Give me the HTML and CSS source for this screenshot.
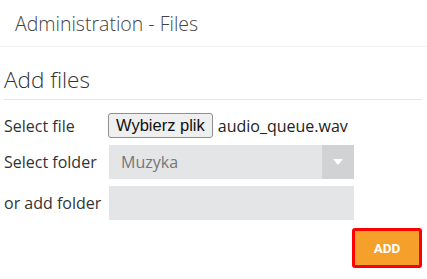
FILE: index.html
```html
<!DOCTYPE html>
<html lang="pl">
<head>
<meta charset="utf-8">
<link rel="stylesheet" href="styles.css">
</head>
<body>
<header class="page-header">
  <h1 class="page-title">Administration - Files</h1>
</header>
<section class="panel">
  <h2 class="panel-title">Add files</h2>
  <div class="form">
    <div class="row row-file">
      <span class="label">Select file</span>
      <div class="file-ctl">
        <span class="file-btn">Wybierz plik</span>
        <span class="file-name">audio_queue.wav</span>
      </div>
    </div>
    <div class="row row-select">
      <span class="label">Select folder</span>
      <div class="select">
        <span class="select-value">Muzyka</span>
        <span class="select-arrow"><svg width="10" height="6" viewBox="0 0 10 6"><path d="M0 0H10L5 6Z" fill="#fff"/></svg></span>
      </div>
    </div>
    <div class="row row-input">
      <span class="label">or add folder</span>
      <div class="text-input"></div>
    </div>
    <div class="actions">
      <button class="add-btn">ADD</button>
    </div>
  </div>
</section>
</body>
</html>
```
FILE: styles.css
```css
html, body {
  margin: 0;
  padding: 0;
  background: #fff;
}
body {
  font-family: "Open Sans", "Liberation Sans", sans-serif;
  color: #333;
  width: 427px;
}
.page-header {
  height: 47px;
  border-bottom: 1px solid #f0f0f0;
  padding-left: 15px;
  box-sizing: border-box;
}
.page-title {
  margin: 0;
  font-size: 19.5px;
  font-weight: 300;
  line-height: 47px;
  color: #444;
}
.panel {
  padding: 0 5px 0 4px;
}
.panel-title {
  margin: 0;
  padding-top: 17px;
  height: 35px;
  font-size: 22.5px;
  font-weight: 300;
  line-height: 31px;
  color: #333;
  border-bottom: 1px solid #e6e6e6;
}
.form {
  padding-top: 13px;
}
.row {
  display: flex;
  align-items: center;
}
.label {
  width: 105px;
  font-size: 16px;
  color: #333;
}
.row-file {
  height: 25px;
  margin-bottom: 7px;
}
.file-ctl {
  display: flex;
  align-items: center;
  gap: 5px;
  margin-left: -1px;
}
.file-btn {
  font-family: "Liberation Sans", Arial, sans-serif;
  font-size: 16.5px;
  color: #111;
  background: #efefef;
  border: 1px solid #8f8f8f;
  border-radius: 3px;
  padding: 1px 7px;
  line-height: 21px;
}
.file-name {
  font-size: 16px;
  color: #222;
}
.select {
  width: 245px;
  height: 34px;
  background: #e3e5e6;
  display: flex;
  align-items: center;
  justify-content: space-between;
}
.select-value {
  padding-left: 12px;
  font-size: 16px;
  color: #777;
}
.select-arrow {
  width: 32px;
  height: 34px;
  background: #d1d2d4;
  display: flex;
  align-items: center;
  justify-content: center;
}
.row-select {
  margin-bottom: 7px;
}
.text-input {
  width: 245px;
  height: 34px;
  background: #e3e5e6;
}
.actions {
  display: flex;
  justify-content: flex-end;
  padding-top: 8px;
  padding-right: 0;
}
.add-btn {
  width: 70px;
  height: 40px;
  background: #f5a02b;
  border: 3px solid #ff0000;
  border-radius: 3px;
  color: #fff;
  font-family: Roboto, "Liberation Sans", sans-serif;
  font-weight: 700;
  font-size: 13.5px;
  padding: 0;
}
```
